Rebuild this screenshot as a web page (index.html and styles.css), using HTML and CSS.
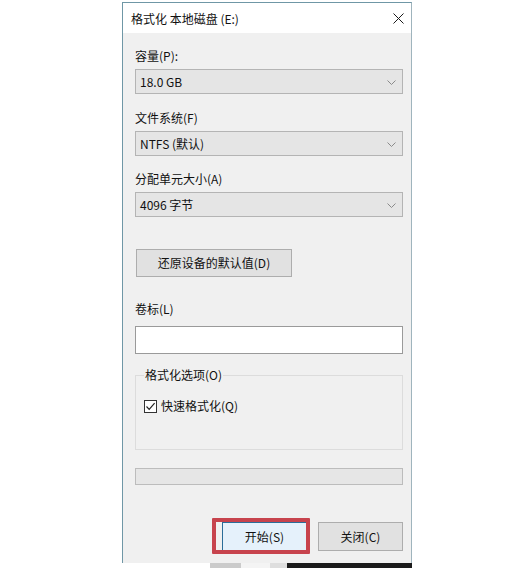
FILE: index.html
```html
<!DOCTYPE html>
<html lang="zh-CN">
<head>
<meta charset="utf-8">
<title>格式化 本地磁盘 (E:)</title>
<link rel="stylesheet" href="styles.css">
</head>
<body>
<div class="dialog">
  <div class="titlebar">
    <span class="title">格式化 本地磁盘 (E:)</span>
    <svg class="close" width="11" height="11" viewBox="0 0 11 11"><path d="M0.5 0.5 L10.5 10.5 M10.5 0.5 L0.5 10.5" stroke="#1a1a1a" stroke-width="1" fill="none"/></svg>
  </div>
  <div class="body">
    <div class="label l1">容量(P):</div>
    <div class="select"><span>18.0 GB</span><svg class="chev" width="9" height="5" viewBox="0 0 9 5"><path d="M0.5 0.5 L4.5 4.5 L8.5 0.5" stroke="#8a8a8a" fill="none"/></svg></div>
    <div class="label l2">文件系统(F)</div>
    <div class="select"><span>NTFS (默认)</span><svg class="chev" width="9" height="5" viewBox="0 0 9 5"><path d="M0.5 0.5 L4.5 4.5 L8.5 0.5" stroke="#8a8a8a" fill="none"/></svg></div>
    <div class="label l3">分配单元大小(A)</div>
    <div class="select"><span>4096 字节</span><svg class="chev" width="9" height="5" viewBox="0 0 9 5"><path d="M0.5 0.5 L4.5 4.5 L8.5 0.5" stroke="#8a8a8a" fill="none"/></svg></div>
    <div class="btn restore">还原设备的默认值(D)</div>
    <div class="label l4">卷标(L)</div>
    <div class="input"></div>
    <fieldset class="group">
      <legend>格式化选项(O)</legend>
      <div class="check-row">
        <span class="checkbox"><svg width="11" height="11" viewBox="0 0 11 11"><path d="M1.5 5.5 L4.2 8.3 L9.6 2.2" stroke="#222" stroke-width="1.2" fill="none"/></svg></span>
        <span>快速格式化(Q)</span>
      </div>
    </fieldset>
    <div class="progress"></div>
    <div class="actions">
      <div class="mark"><div class="btn start">开始(S)</div></div>
      <div class="btn close-btn">关闭(C)</div>
    </div>
  </div>
</div>
<div class="strip">
  <span class="s0"></span><span class="s1"></span><span class="s2"></span><span class="s3"></span><span class="s4"></span>
</div>
</body>
</html>
```
FILE: styles.css
```css
html, body {
  margin: 0;
  padding: 0;
  background: #ffffff;
}
body {
  font-family: "Noto Sans CJK SC", "Noto Sans", sans-serif;
  font-size: 12px;
  color: #111;
  width: 512px;
  height: 568px;
  overflow: hidden;
}
.dialog {
  margin: 2px 0 0 122px;
  width: 288px;
  border: 1px solid #6f97a6;
  border-bottom: none;
  border-right-color: #9fb4bd;
  background: #f0f0f0;
}
.titlebar {
  height: 30px;
  background: #ffffff;
  display: flex;
  align-items: flex-start;
  justify-content: space-between;
}
.title {
  line-height: 16px;
  padding: 8px 0 0 8px;
}
.close {
  margin: 10px 7px 0 0;
}
.body {
  padding: 0 8px 0 12px;
  height: 530px;
  display: flex;
  flex-direction: column;
}
.label {
  line-height: 16px;
  height: 16px;
}
.l1 { margin-top: 15px; }
.l2 { margin-top: 16px; }
.l3 { margin-top: 15px; }
.l4 { margin-top: 24px; }
.select {
  margin-top: 5px;
  height: 23px;
  border: 1px solid #b4b4b4;
  background: #e5e5e5;
  display: flex;
  align-items: center;
  justify-content: space-between;
  padding: 0 6px 0 4px;
  line-height: 16px;
}
.chev { margin-top: 1px; }
.btn {
  box-sizing: border-box;
  border: 1px solid #adadad;
  background: #e1e1e1;
  display: flex;
  align-items: center;
  justify-content: center;
  line-height: 16px;
}
.restore {
  margin-top: 32px;
  width: 156px;
  height: 28px;
  margin-left: 1px;
}
.input {
  margin-top: 9px;
  height: 26px;
  border: 1px solid #9a9a9a;
  background: #ffffff;
}
.group {
  margin: 13px 0 0 0;
  padding: 0 8px;
  border: 1px solid #dcdcdc;
  min-width: 0;
}
.group legend {
  padding: 0 1px;
  line-height: 16px;
  margin-left: 0;
}
.check-row {
  margin-top: 15px;
  height: 16px;
  margin-bottom: 35px;
  display: flex;
  align-items: center;
  gap: 4px;
  line-height: 16px;
}
.checkbox {
  box-sizing: border-box;
  width: 13px;
  height: 13px;
  border: 1px solid #333;
  background: #ffffff;
  display: flex;
  align-items: center;
  justify-content: center;
}
.progress {
  margin-top: 18px;
  height: 15px;
  border: 1px solid #bcbcbc;
  background: #e6e6e6;
}
.actions {
  margin-top: 37px;
  display: flex;
  justify-content: flex-end;
  gap: 11px;
}
.actions .btn {
  width: 85px;
  height: 29px;
}
.mark {
  position: relative;
}
.mark::after {
  content: "";
  position: absolute;
  left: -10px;
  right: -3px;
  top: -4px;
  bottom: -3px;
  border: 4px solid #c7434d;
  border-radius: 1px;
}
.start {
  background: #e5f1fb;
  border-color: #2a6d99;
}
.strip {
  margin-top: 0;
  display: flex;
  height: 5px;
}
.strip span { display: block; height: 5px; }
.s0 { width: 210px; background: #ffffff; }
.s1 { width: 31px; background: #cbcbcb; }
.s2 { width: 29px; background: #f4f4f4; }
.s3 { width: 17px; background: #dedede; }
.s4 { width: 125px; background: #1b1b1b; }
```
